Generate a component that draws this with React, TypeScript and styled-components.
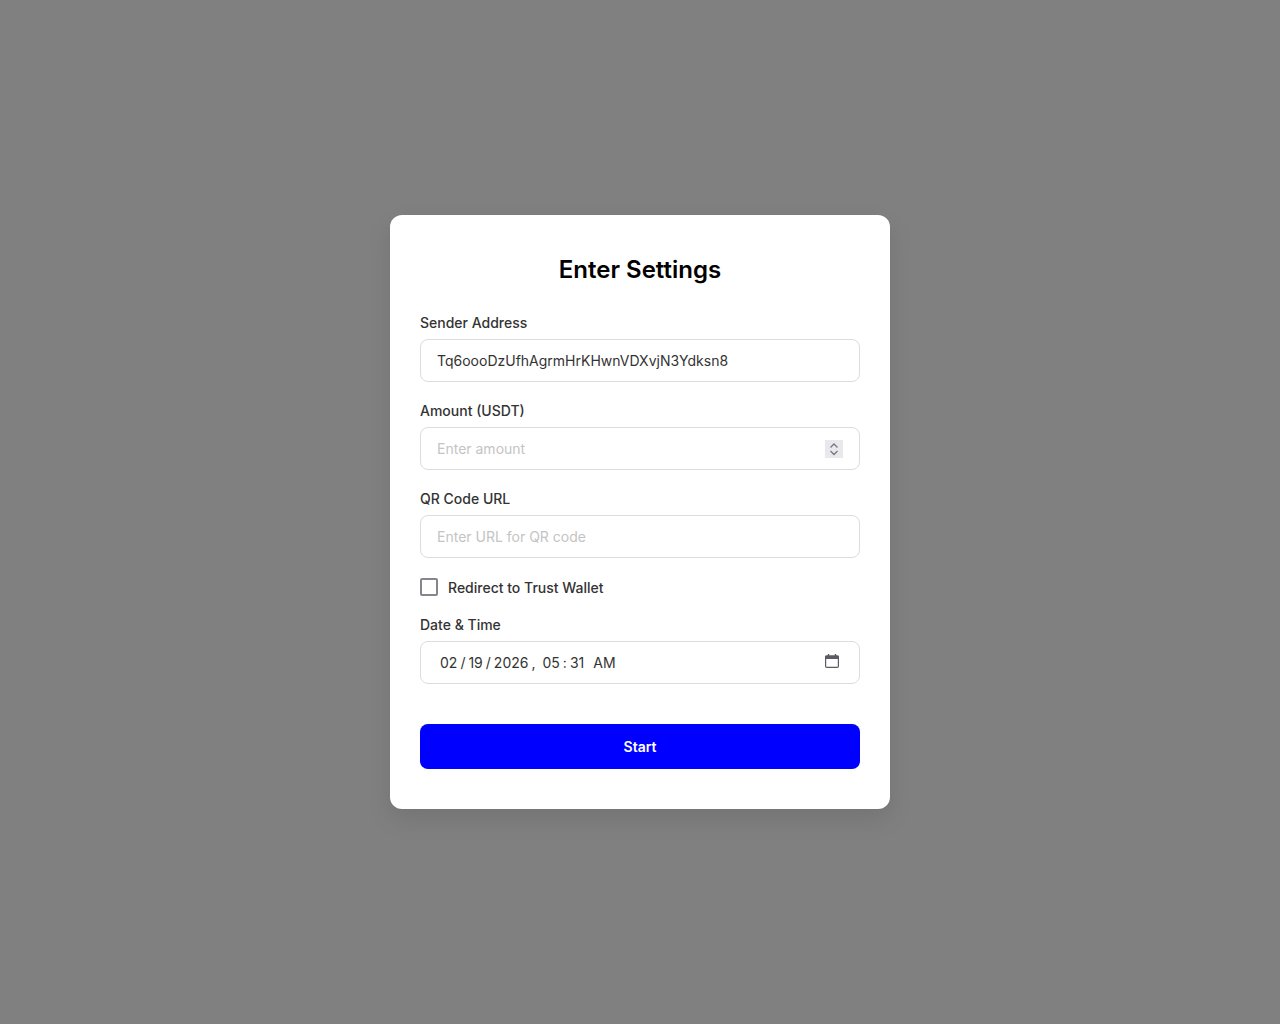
import styled, { createGlobalStyle } from "styled-components";

const GlobalStyle = createGlobalStyle`
  html, body {
    margin: 0;
    padding: 0;
    height: 100%;
  }

  body {
    background: #808080;
    font-family: "Inter", "Liberation Sans", sans-serif;
  }

  * {
    box-sizing: border-box;
  }
`;

const App = () => {
  return (
    <Overlay>
      <GlobalStyle />
      <Card>
        <Title>Enter Settings</Title>

        <Field>
          <Label>Sender Address</Label>
          <Input type="text" defaultValue="Tq6oooDzUfhAgrmHrKHwnVDXvjN3Ydksn8" />
        </Field>

        <Field>
          <Label>Amount (USDT)</Label>
          <InputWrap>
            <Input type="number" placeholder="Enter amount" />
            <Spinner>
              <svg width="18" height="18" viewBox="0 0 18 18" fill="none" stroke="#77777f" strokeWidth="1.3">
                <path d="M5.5 7.5 9 4l3.5 3.5" />
                <path d="M5.5 11 9 14.5l3.5-3.5" />
              </svg>
            </Spinner>
          </InputWrap>
        </Field>

        <Field>
          <Label>QR Code URL</Label>
          <Input type="text" placeholder="Enter URL for QR code" />
        </Field>

        <CheckRow>
          <Check type="checkbox" />
          <CheckText>Redirect to Trust Wallet</CheckText>
        </CheckRow>

        <Field>
          <Label>Date &amp; Time</Label>
          <DateBox>
            <DateGroup>
              <span>02</span>
              <span>/</span>
              <span>19</span>
              <span>/</span>
              <span>2026</span>
            </DateGroup>
            <Comma>,</Comma>
            <TimeGroup>
              <span>05</span>
              <span>:</span>
              <span>31</span>
            </TimeGroup>
            <Meridiem>AM</Meridiem>
            <CalendarIcon width="16" height="16" viewBox="0 0 16 16" fill="none">
              <path d="M4.5 1v3M11.5 1v3" stroke="#5b5b66" strokeWidth="1.4" />
              <path d="M1 3.5a1 1 0 0 1 1-1h12a1 1 0 0 1 1 1V6H1z" fill="#5b5b66" />
              <rect x="1.6" y="3" width="12.8" height="11.4" rx="1.2" stroke="#5b5b66" strokeWidth="1.2" />
            </CalendarIcon>
          </DateBox>
        </Field>

        <StartButton type="button">Start</StartButton>
      </Card>
    </Overlay>
  );
};

export default App;

const Overlay = styled.div`
  width: 100%;
  height: 1024px;

  display: flex;
  align-items: center;
  justify-content: center;
`;

const Card = styled.div`
  width: 500px;
  height: 594px;
  padding: 40px 30px;

  display: flex;
  flex-direction: column;

  background: #fff;
  border-radius: 12px;
  box-shadow: 0 10px 25px rgba(0, 0, 0, 0.1);
`;

const Title = styled.h2`
  margin: 0 0 30px;

  font-size: 24px;
  line-height: 29px;
  font-weight: 600;
  text-align: center;
  color: #000;
`;

const Field = styled.label`
  display: flex;
  flex-direction: column;
  margin-bottom: 20px;
`;

const Label = styled.span`
  margin-bottom: 8px;

  font-size: 14px;
  line-height: 17px;
  font-weight: 500;
  color: #333;
`;

const InputWrap = styled.div`
  position: relative;
`;

const Input = styled.input`
  width: 100%;
  height: 43px;
  padding: 12px 16px;

  font-family: inherit;
  font-size: 14px;
  color: #333;

  background: #fff;
  border: 1px solid #ddd;
  border-radius: 8px;
  outline: none;
  appearance: textfield;

  &::placeholder {
    color: #c4c4c4;
  }

  &::-webkit-inner-spin-button,
  &::-webkit-outer-spin-button {
    appearance: none;
    margin: 0;
  }
`;

const Spinner = styled.div`
  position: absolute;
  top: 13px;
  right: 17px;
  width: 18px;
  height: 18px;

  display: flex;

  background: #e9e9ed;
`;

const CheckRow = styled.label`
  display: flex;
  align-items: center;
  gap: 10px;
  height: 18px;
  margin-bottom: 20px;
`;

const Check = styled.input`
  width: 18px;
  height: 18px;
  margin: 0;

  appearance: none;
  background: #fff;
  border: 2px solid #85858f;
  border-radius: 2px;
`;

const CheckText = styled.span`
  font-size: 14px;
  font-weight: 500;
  color: #333;
`;

const DateBox = styled.div`
  width: 100%;
  height: 43px;
  padding: 0 20px 0 19px;

  display: flex;
  align-items: center;

  font-size: 14px;
  color: #333;

  background: #fff;
  border: 1px solid #ddd;
  border-radius: 8px;
`;

const DateGroup = styled.div`
  display: flex;
  gap: 3px;
`;

const Comma = styled.span`
  margin-left: 3px;
`;

const TimeGroup = styled.div`
  display: flex;
  gap: 3px;
  margin-left: 7px;
`;

const Meridiem = styled.span`
  margin-left: 9px;
`;

const CalendarIcon = styled.svg`
  margin-left: auto;
  margin-top: -3px;
  margin-right: -1px;
`;

const StartButton = styled.button`
  width: 100%;
  height: 45px;
  margin-top: 20px;

  font-family: inherit;
  font-size: 14px;
  font-weight: 600;
  color: #fff;

  background: #0000ff;
  border: none;
  border-radius: 8px;
`;
